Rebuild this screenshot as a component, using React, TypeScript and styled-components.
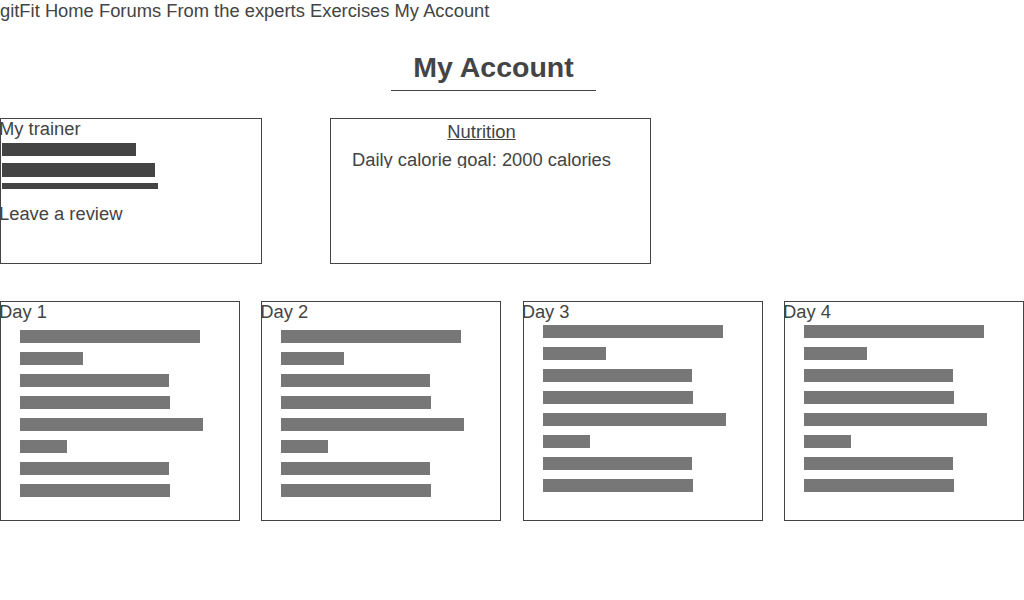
import styled, { createGlobalStyle } from "styled-components";

const GlobalStyle = createGlobalStyle`
  body {
    margin: 0;
    font-family: "Liberation Sans", Arial, sans-serif;
    color: #444;
    background: #fff;
  }
`;

const Nav = styled.nav`
  font-size: 18.35px;
  line-height: 21px;
  white-space: nowrap;
`;

const NavLink = styled.a`
  color: inherit;
  text-decoration: none;
`;

const TitleRow = styled.div`
  display: flex;
  justify-content: center;
  padding-right: 37px;
  margin-top: 30px;
`;

const Title = styled.h1`
  margin: 0;
  width: 205px;
  text-align: center;
  font-size: 28.5px;
  line-height: 32px;
  font-weight: bold;
  padding-bottom: 7px;
  border-bottom: 1px solid #444;
`;

const TopRow = styled.div`
  display: flex;
  gap: 68px;
  margin-top: 27px;
`;

const Card = styled.section<{ $width: number; $height: number }>`
  box-sizing: border-box;
  width: ${(p) => p.$width}px;
  height: ${(p) => p.$height}px;
  border: 1px solid #444;
  font-size: 18.35px;
  line-height: 21px;
`;

const CardLabel = styled.div`
  margin: -1px 0 0 -2px;
`;

const TrainerBars = styled.div`
  display: flex;
  flex-direction: column;
  align-items: flex-start;
  margin: 4px 0 0 1px;
`;

const Redacted = styled.div<{ $w: number; $h: number; $gap?: number; $tone: string }>`
  width: ${(p) => p.$w}px;
  height: ${(p) => p.$h}px;
  margin-top: ${(p) => p.$gap ?? 0}px;
  background: ${(p) => p.$tone};
  flex-shrink: 0;
`;

const ReviewLink = styled.div`
  margin: 14px 0 0 -2px;
`;

const NutritionBody = styled.div`
  padding: 2px 18px 0 0;
  text-align: center;
`;

const NutritionTitle = styled.div`
  text-decoration: underline;
`;

const CalorieGoal = styled.div`
  margin-top: 7px;
  height: 19px;
  overflow: hidden;
`;

const DayRow = styled.div`
  display: flex;
  justify-content: space-between;
  margin-top: 37px;
`;

const DayList = styled.div<{ $compact?: boolean }>`
  display: flex;
  flex-direction: column;
  align-items: flex-start;
  gap: 9px;
  padding-left: 19px;
  margin-top: ${(p) => (p.$compact ? 3 : 8)}px;
`;

const exerciseWidths = [180, 63, 149, 150, 183, 47, 149, 150];

const days = [
  { label: "Day 1", compact: false },
  { label: "Day 2", compact: false },
  { label: "Day 3", compact: true },
  { label: "Day 4", compact: true },
];

export default function App() {
  return (
    <>
      <GlobalStyle />
      <Nav>
        <NavLink href="#">gitFit</NavLink> <NavLink href="#">Home</NavLink>{" "}
        <NavLink href="#">Forums</NavLink> <NavLink href="#">From the experts</NavLink>{" "}
        <NavLink href="#">Exercises</NavLink> <NavLink href="#">My Account</NavLink>
      </Nav>

      <TitleRow>
        <Title>My Account</Title>
      </TitleRow>

      <TopRow>
        <Card $width={262} $height={146}>
          <CardLabel>My trainer</CardLabel>
          <TrainerBars>
            <Redacted $w={134} $h={13} $tone="#444" />
            <Redacted $w={153} $h={14} $gap={7} $tone="#444" />
            <Redacted $w={156} $h={6} $gap={6} $tone="#444" />
          </TrainerBars>
          <ReviewLink>Leave a review</ReviewLink>
        </Card>

        <Card $width={321} $height={146}>
          <NutritionBody>
            <NutritionTitle>Nutrition</NutritionTitle>
            <CalorieGoal>Daily calorie goal: 2000 calories</CalorieGoal>
          </NutritionBody>
        </Card>
      </TopRow>

      <DayRow>
        {days.map((day) => (
          <Card key={day.label} $width={240} $height={220}>
            <CardLabel>{day.label}</CardLabel>
            <DayList $compact={day.compact}>
              {exerciseWidths.map((w, i) => (
                <Redacted key={i} $w={w} $h={13} $tone="#777" />
              ))}
            </DayList>
          </Card>
        ))}
      </DayRow>
    </>
  );
}
